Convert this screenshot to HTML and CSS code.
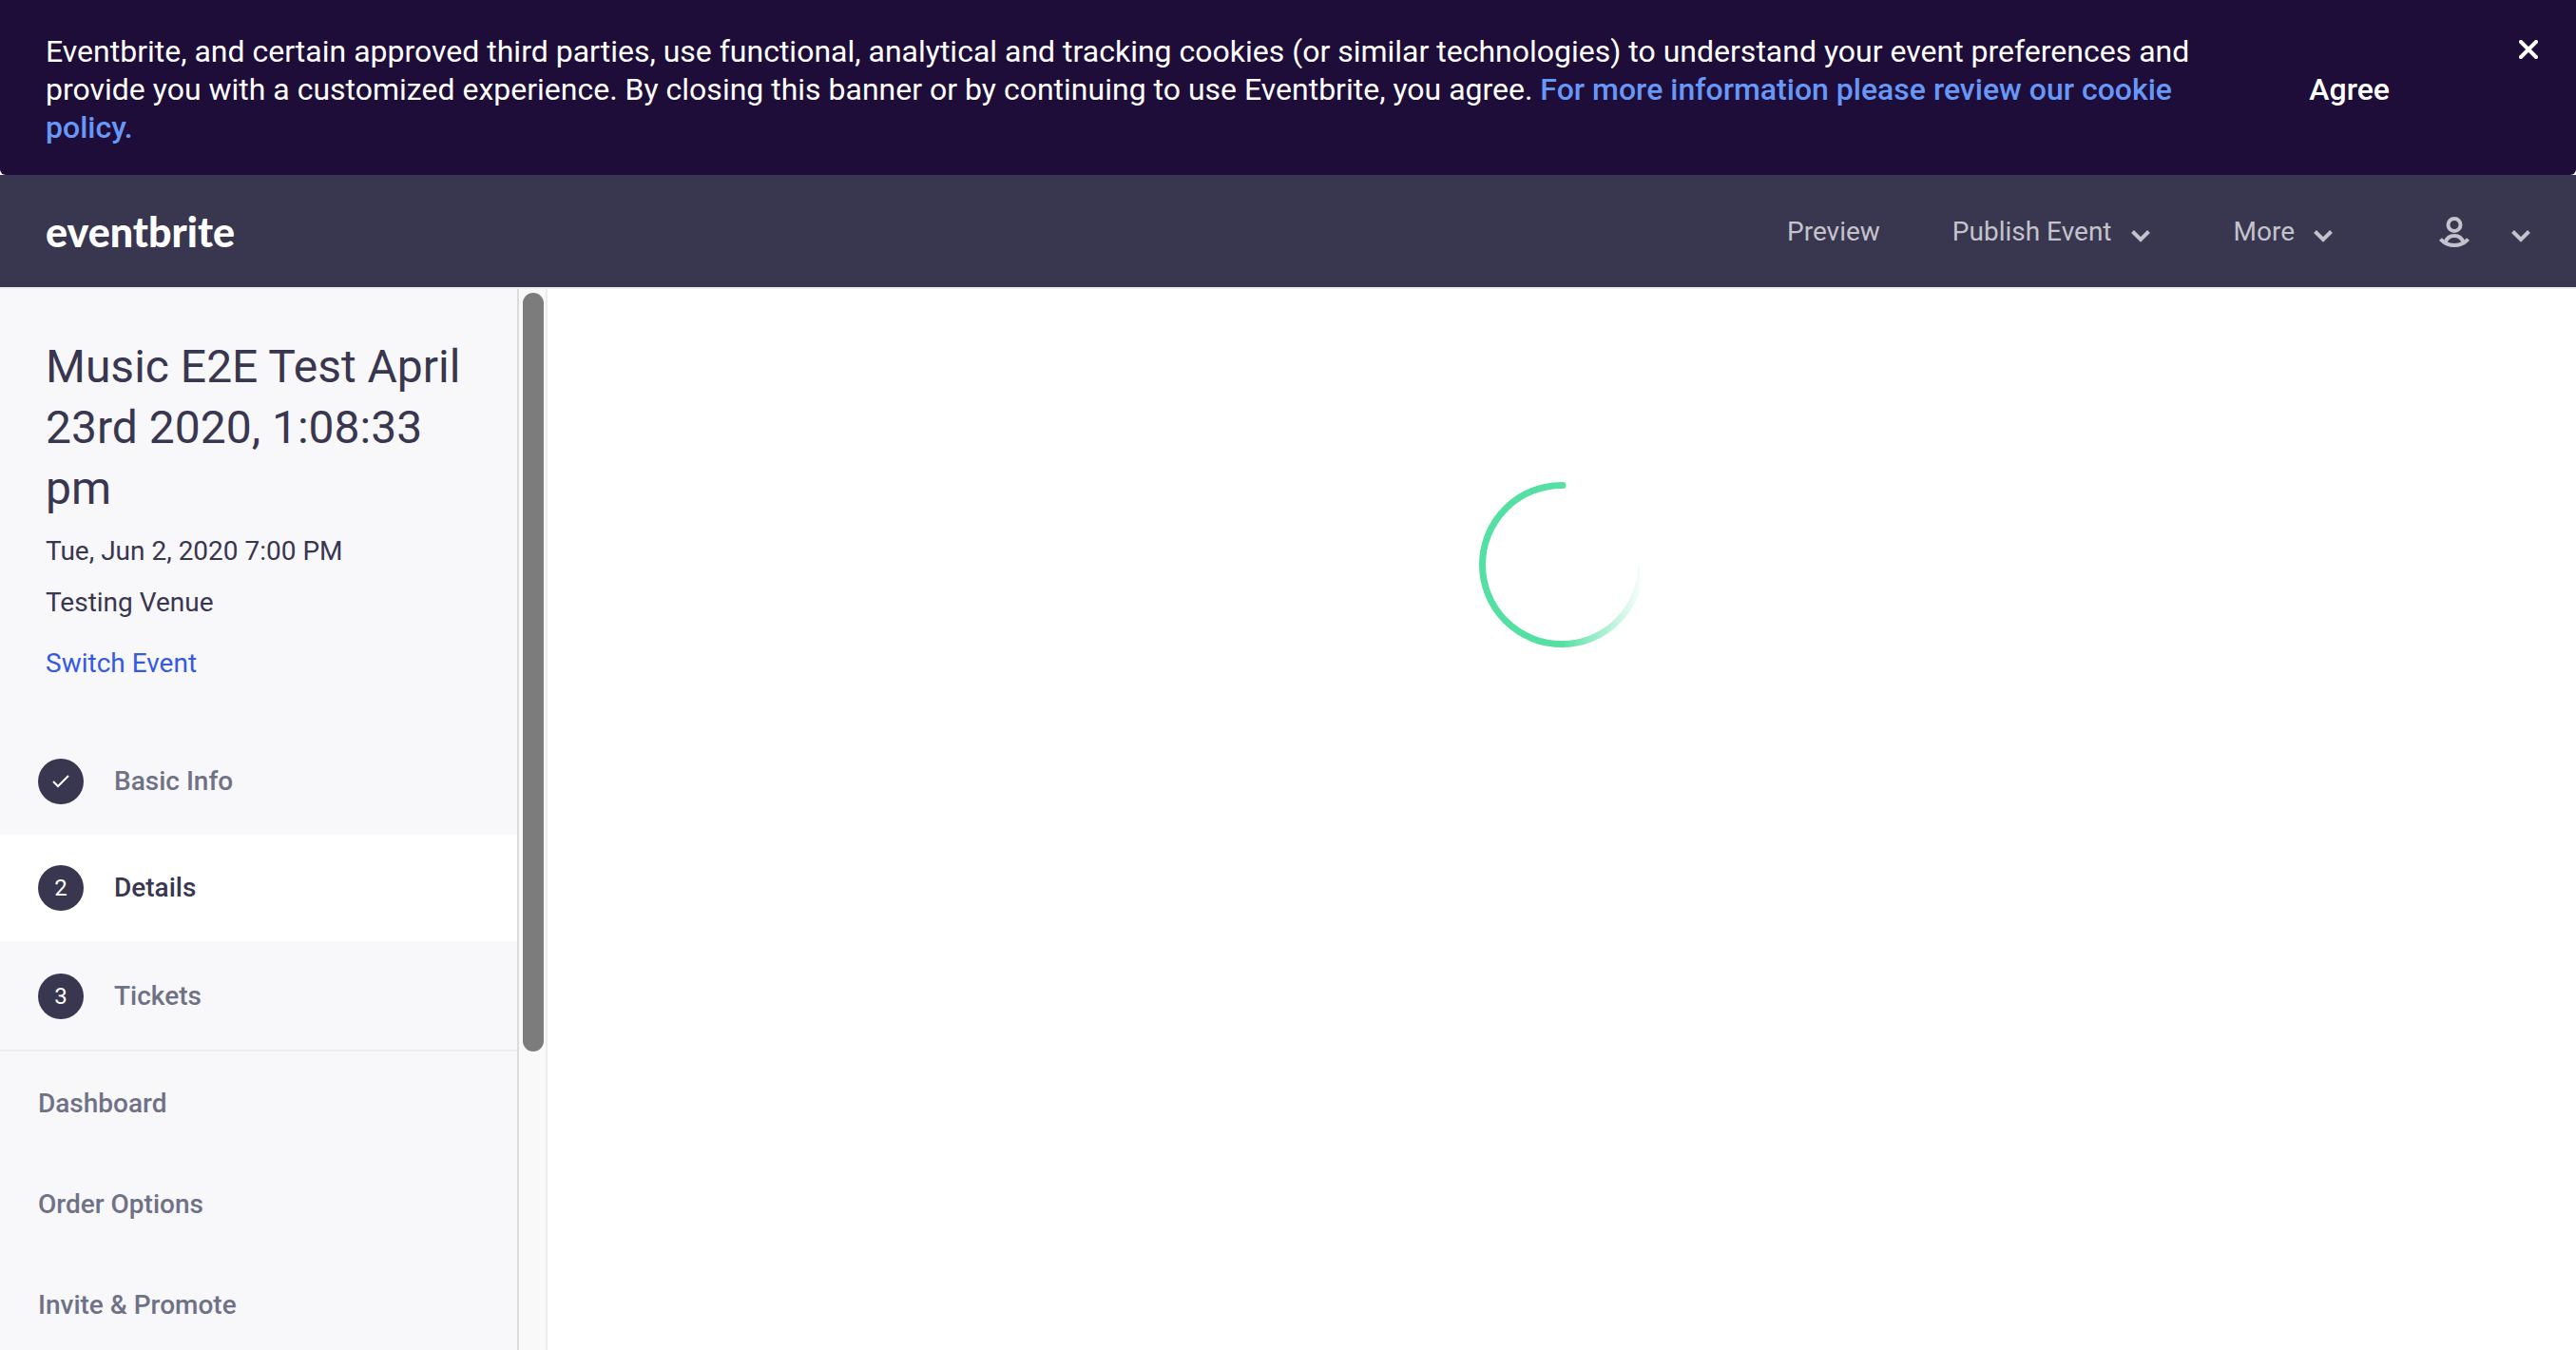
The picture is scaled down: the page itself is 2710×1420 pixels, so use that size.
FILE: index.html
```html
<!DOCTYPE html>
<html lang="en">
<head>
<meta charset="utf-8">
<title>Music E2E Test April 23rd 2020 | Eventbrite</title>
<link rel="stylesheet" href="styles.css">
</head>
<body>
<div class="banner" role="region" aria-label="Cookies">
  <p class="banner-text">Eventbrite, and certain approved third parties, use functional, analytical and tracking cookies (or similar technologies) to understand your event preferences and provide you with a customized experience. By closing this banner or by continuing to use Eventbrite, you agree. <a class="banner-link" href="#">For more information please review our cookie policy.</a></p>
  <button class="agree" type="button">Agree</button>
  <button class="close" type="button" aria-label="Close">
    <svg width="20" height="20" viewBox="0 0 20 20" fill="none" stroke="currentColor" stroke-width="4" stroke-linecap="round"><path d="M2 2l16 16M18 2L2 18"/></svg>
  </button>
</div>
<header class="topbar">
  <a class="logo" href="#">eventbrite</a>
  <nav class="topnav" aria-label="Event actions">
    <a class="topnav-item" href="#">Preview</a>
    <button class="topnav-item menu" type="button">Publish Event
      <svg class="chevron" viewBox="0 0 20 14" fill="none" stroke="currentColor" stroke-width="4"><path d="M1.500 2.500l8.500 8.500 8.500-8.500"/></svg>
    </button>
    <button class="topnav-item menu" type="button">More
      <svg class="chevron" viewBox="0 0 20 14" fill="none" stroke="currentColor" stroke-width="4"><path d="M1.500 2.500l8.500 8.500 8.500-8.500"/></svg>
    </button>
    <button class="topnav-item account" type="button" aria-label="Account">
      <svg width="32" height="32" viewBox="0 0 32 32" fill="none" stroke="currentColor" stroke-width="4"><circle cx="16" cy="8.500" r="6.500"/><path d="M6.500 27C8 22.500 11.500 20 16 20s8 2.500 9.500 7"/><path d="M1.500 23.500C5.500 28 10.500 30 16 30s10.500-2 14.500-6.500"/></svg>
      <svg class="chevron" viewBox="0 0 20 14" fill="none" stroke="currentColor" stroke-width="4"><path d="M1.500 2.500l8.500 8.500 8.500-8.500"/></svg>
    </button>
  </nav>
</header>
<div class="layout">
  <aside class="sidebar">
    <section class="event">
      <h1 class="event-title">Music E2E Test April 23rd 2020, 1:08:33 pm</h1>
      <p class="event-line">Tue, Jun 2, 2020 7:00 PM</p>
      <p class="event-line">Testing Venue</p>
      <a class="switch" href="#">Switch Event</a>
    </section>
    <nav aria-label="Event setup">
      <ol class="steps">
        <li><a class="step" href="#"><span class="badge"><svg width="18" height="16" viewBox="0 0 18 16" fill="none" stroke="currentColor" stroke-width="2"><path d="M1 8l5 5L17 2"/></svg></span>Basic Info</a></li>
        <li><a class="step current" href="#" aria-current="step"><span class="badge">2</span>Details</a></li>
        <li><a class="step" href="#"><span class="badge">3</span>Tickets</a></li>
      </ol>
      <ul class="links">
        <li><a class="side-link" href="#">Dashboard</a></li>
        <li><a class="side-link" href="#">Order Options</a></li>
        <li><a class="side-link" href="#">Invite &amp; Promote</a></li>
      </ul>
    </nav>
  </aside>
  <div class="track"><div class="thumb"></div></div>
  <main class="content">
    <svg class="spinner" viewBox="0 0 174 174" role="img" aria-label="Loading">
      <defs>
        <linearGradient id="fade" gradientUnits="userSpaceOnUse" x1="87" y1="0" x2="174" y2="0"><stop offset="0" stop-color="#55e0a3"/><stop offset="1" stop-color="#55e0a3" stop-opacity="0"/></linearGradient>
        <clipPath id="edge"><rect width="169" height="174"/></clipPath>
      </defs>
      <path d="M87 170.500A83.500 83.500 0 0 1 87 3.500H88" fill="none" stroke="#55e0a3" stroke-width="7" stroke-linecap="round"/>
      <path d="M87 170.500A83.500 83.500 0 0 0 170.500 87" fill="none" stroke="url(#fade)" stroke-width="7" clip-path="url(#edge)"/>
    </svg>
  </main>
</div>
</body>
</html>
```
FILE: styles.css
```css
* { box-sizing: border-box; }

body {
  margin: 0;
  height: 100vh;
  display: flex;
  flex-direction: column;
  overflow: hidden;
  background: #fff;
  color: #39364f;
  font-family: Roboto, "Liberation Sans", sans-serif;
  font-size: 28px;
  line-height: 36px;
}

h1, p, ol, ul { margin: 0; padding: 0; font-weight: 400; }
ol, ul { list-style: none; }
a { color: inherit; text-decoration: none; }
button { padding: 0; border: 0; background: none; color: inherit; font: inherit; cursor: pointer; }
svg { display: block; }

.banner {
  display: flex;
  align-items: flex-start;
  flex: none;
  padding: 34px 40px 30px 48px;
  border-radius: 0 0 6px 6px;
  background: #1e0d38;
  color: #fff;
  font-size: 32px;
  line-height: 40px;
}
.banner-text { flex: 1; }
.banner-link { color: #6898f7; font-weight: 500; }
.agree { margin: 40px 136px 0 120px; font-weight: 500; }
.close { padding-top: 8px; }

.topbar {
  display: flex;
  align-items: center;
  justify-content: space-between;
  flex: none;
  height: 120px;
  padding: 2px 48px 0;
  border-bottom: 2px solid #eeedf2;
  background: #39364f;
  color: #c4c3cd;
}
.logo { color: #fff; font: 900 43px/48px Lato, sans-serif; }
.topnav { display: flex; align-items: center; gap: 76px; }
.topnav-item { display: flex; align-items: center; gap: 20px; }
.menu + .menu { margin-left: 12px; }
.chevron { width: 20px; height: 14px; margin-top: 8px; }
.account { gap: 44px; margin-left: 36px; }

.layout { display: flex; flex: 1; min-height: 0; }
.sidebar { flex: none; width: 544px; overflow: hidden; background: #f8f7fa; }
.event { padding: 50px 56px 50px 48px; }
.event-title { font-size: 48px; line-height: 64px; }
.event-line { padding-top: 18px; }
.event-title + .event-line { padding-top: 16px; }
.switch { display: inline-block; padding-top: 28px; color: #3659e3; }

.steps { border-bottom: 2px solid #eeedf2; }
.step {
  display: flex;
  align-items: center;
  gap: 32px;
  height: 112px;
  padding: 0 40px;
  color: #6f7287;
  font-weight: 500;
}
.current { margin-bottom: 2px; background: #fff; color: #39364f; }
.badge {
  display: grid;
  place-items: center;
  width: 48px;
  height: 48px;
  border-radius: 50%;
  background: #39364f;
  color: #fff;
  font-size: 24px;
  font-weight: 400;
}
.links { padding-top: 2px; }
.side-link { display: flex; align-items: center; height: 106px; padding: 0 40px; color: #6f7287; font-weight: 500; }

.track {
  flex: none;
  width: 32px;
  padding: 4px;
  border: solid #dcdcdc;
  border-width: 0 2px;
  border-right-color: #ececec;
  background: #f9f9f9;
}
.thumb { width: 22px; height: 72%; margin: 0 auto; border-radius: 11px; background: #7c7c7c; }

.content { flex: 1; padding-top: 203px; }
.spinner { width: 174px; height: 174px; margin: 0 auto; }
```
